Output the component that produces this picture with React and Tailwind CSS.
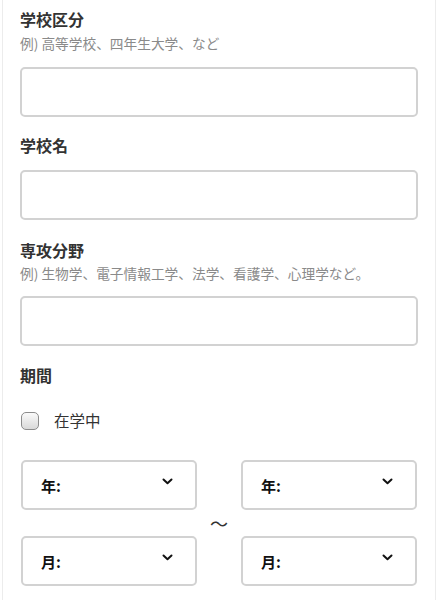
import React from "react";

const font = { fontFamily: '"Noto Sans CJK JP", "Noto Sans", sans-serif' };

const Chevron = () => (
  <svg width="11" height="7" viewBox="0 0 11 7" className="mt-[-8px]">
    <path d="M1.5 1.5 L5.5 5.2 L9.5 1.5" fill="none" stroke="#111" strokeWidth="2" strokeLinecap="round" strokeLinejoin="round" />
  </svg>
);

const SelectBox = ({ label }) => (
  <div className="h-[50px] w-[176px] rounded-[5px] border-2 border-[#d2d2d2] bg-white flex items-center justify-between pl-[18px] pr-[22px]">
    <span className="text-[15px] font-bold text-[#111] leading-none">{label}</span>
    <Chevron />
  </div>
);

const TextField = () => (
  <div className="h-[50px] w-[398px] rounded-[5px] border-2 border-[#d2d2d2] bg-white" />
);

export default function App() {
  return (
    <div className="bg-white min-h-[600px] pl-[2px]" style={font}>
      <div className="w-[434px] min-h-[600px] border-x border-[#ececec] pl-[17px] pt-[7px]">
        <div className="text-[16px] leading-[24px] font-bold text-[#333]">学校区分</div>
        <div className="mt-[2px] text-[13.7px] leading-[20px] text-[#8a8a8a]">例) 高等学校、四年生大学、など</div>
        <div className="mt-[14px]">
          <TextField />
        </div>

        <div className="mt-[16px] text-[16px] leading-[24px] font-bold text-[#333]">学校名</div>
        <div className="mt-[13px]">
          <TextField />
        </div>

        <div className="mt-[18px] text-[16px] leading-[24px] font-bold text-[#333]">専攻分野</div>
        <div className="mt-[1px] text-[13.7px] leading-[20px] text-[#8a8a8a]">例) 生物学、電子情報工学、法学、看護学、心理学など。</div>
        <div className="mt-[13px]">
          <TextField />
        </div>

        <div className="mt-[17px] text-[16px] leading-[24px] font-bold text-[#333]">期間</div>

        <label className="mt-[22px] ml-[1px] flex items-center h-[24px]">
          <span className="w-[18px] h-[18px] rounded-[5px] border border-[#8c8c8c] bg-gradient-to-b from-[#fafafa] to-[#d9d9d9]" />
          <span className="ml-[15px] text-[15.5px] text-[#333]">在学中</span>
        </label>

        <div className="mt-[27px] ml-[1px] grid grid-cols-[176px_44px_176px] grid-rows-[50px_50px] gap-y-[26px]">
          <SelectBox label="年:" />
          <div className="row-span-2 flex items-center justify-center text-[18px] text-[#333] leading-none">〜</div>
          <SelectBox label="年:" />
          <SelectBox label="月:" />
          <SelectBox label="月:" />
        </div>
      </div>
    </div>
  );
}
